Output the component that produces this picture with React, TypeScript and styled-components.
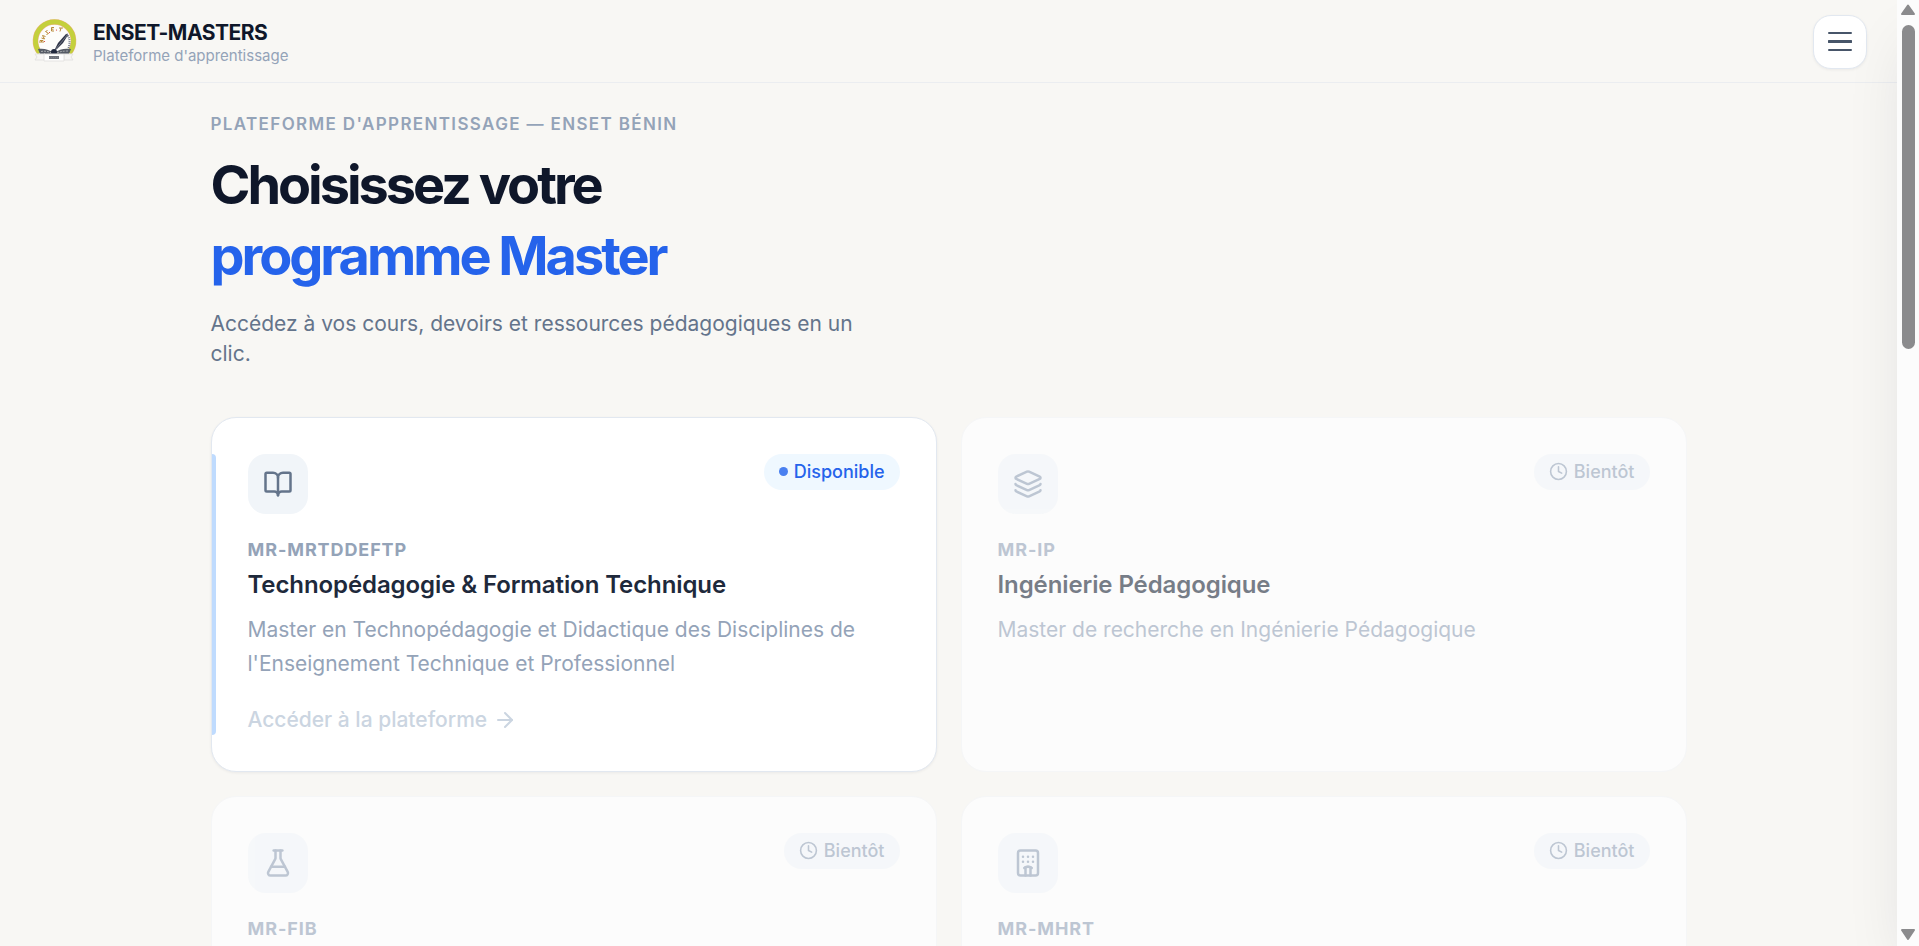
import React from "react";
import styled, { createGlobalStyle, css } from "styled-components";
import {
  ArrowRight,
  BookOpen,
  Clock,
  FlaskConical,
  Hotel,
  Layers,
  type LucideIcon,
} from "lucide-react";

const GlobalStyle = createGlobalStyle`
  *, *::before, *::after { box-sizing: border-box; }
  body {
    margin: 0;
    background: #f8f7f4;
    color: #0f172a;
    font-family: Inter, "Liberation Sans", sans-serif;
  }
  h1, h2, p { margin: 0; }
`;

const Shell = styled.div`
  display: flex;
  height: 100vh;
  overflow: hidden;
`;

const Page = styled.div`
  position: relative;
  flex: 1;
  min-width: 0;
  overflow: hidden;
`;

const Header = styled.header`
  display: flex;
  align-items: center;
  justify-content: space-between;
  height: 83px;
  padding: 2px 30px 0;
  border-bottom: 1px solid #ebedf0;
`;

const Brand = styled.a`
  display: flex;
  align-items: center;
  gap: 13px;
  color: inherit;
  text-decoration: none;
`;

const BrandText = styled.span`
  display: flex;
  flex-direction: column;
  padding-top: 4px;
`;

const BrandName = styled.span`
  font-size: 21px;
  line-height: 24px;
  font-weight: 700;
  letter-spacing: -0.025em;
`;

const BrandTagline = styled.span`
  font-size: 15px;
  line-height: 22px;
  color: #94a3b8;
`;

const MenuButton = styled.button`
  display: flex;
  align-items: center;
  justify-content: center;
  width: 54px;
  height: 54px;
  padding: 0;
  border: 1px solid #e2e8f0;
  border-radius: 18px;
  background: #fff;
  color: #475569;
  box-shadow: 0 1px 3px rgba(15, 23, 42, 0.06);
  cursor: pointer;
`;

const Main = styled.main`
  max-width: 1536px;
  margin: 0 auto;
  padding: 28px 30px 60px;
`;

const Hero = styled.section`
  margin-bottom: 48px;
`;

const Eyebrow = styled.p`
  margin-bottom: 12px;
  font-size: 17px;
  line-height: 26px;
  font-weight: 600;
  letter-spacing: 0.08em;
  text-transform: uppercase;
  color: #94a3b8;
`;

const Headline = styled.h1`
  margin-bottom: 18px;
  font-size: 54px;
  line-height: 71px;
  font-weight: 700;
  letter-spacing: -0.056em;
`;

const HeadlineAccent = styled.span`
  display: block;
  color: #2563eb;
`;

const Lead = styled.p`
  max-width: 660px;
  font-size: 21px;
  line-height: 30px;
  color: #64748b;
`;

const Grid = styled.section`
  display: grid;
  grid-template-columns: repeat(2, minmax(0, 1fr));
  gap: 24px;
`;

const cardBase = css`
  position: relative;
  display: block;
  min-height: 355px;
  padding: 36px;
  border: 1px solid #e2e8f0;
  border-radius: 25px;
  background: #fff;
  color: inherit;
  text-decoration: none;
`;

const OpenCard = styled.a`
  ${cardBase}
  box-shadow: 0 1px 3px rgba(15, 23, 42, 0.06);

  &::before {
    content: "";
    position: absolute;
    top: 36px;
    bottom: 36px;
    left: 0;
    width: 4px;
    border-radius: 0 4px 4px 0;
    background: #bfdbfe;
  }
`;

const SoonCard = styled.article`
  ${cardBase}
  border-color: #f5f6f7;
  background: #fcfcfc;

  & > * {
    opacity: 0.6;
  }
`;

const CardTop = styled.div`
  display: flex;
  align-items: flex-start;
  justify-content: space-between;
  margin-bottom: 22px;
`;

const IconTile = styled.span<{ $active: boolean }>`
  display: flex;
  align-items: center;
  justify-content: center;
  width: 60px;
  height: 60px;
  border-radius: 18px;
  background: #f1f5f9;
  color: ${({ $active }) => ($active ? "#64748b" : "#94a3b8")};
`;

const Badge = styled.span<{ $active: boolean }>`
  display: flex;
  align-items: center;
  gap: 6px;
  height: 36px;
  padding: 0 15px 1px;
  border-radius: 18px;
  font-size: 18px;
  line-height: 27px;
  font-weight: 500;
  background: ${({ $active }) => ($active ? "#eff8ff" : "#f1f5f9")};
  color: ${({ $active }) => ($active ? "#2563eb" : "#94a3b8")};
`;

const Dot = styled.span`
  width: 9px;
  height: 9px;
  border-radius: 50%;
  background: #4a80f0;
`;

const Code = styled.p`
  margin-bottom: 5px;
  font-size: 18px;
  line-height: 27px;
  font-weight: 700;
  letter-spacing: 0.05em;
  color: #94a3b8;
`;

const Title = styled.h2`
  margin-bottom: 12px;
  font-size: 24px;
  line-height: 33px;
  font-weight: 600;
  letter-spacing: -0.004em;
  color: #1e293b;
`;

const Description = styled.p`
  font-size: 21px;
  line-height: 34px;
  color: #94a3b8;
`;

const Access = styled.span`
  display: flex;
  align-items: center;
  gap: 6px;
  margin-top: 24px;
  font-size: 21px;
  line-height: 30px;
  font-weight: 500;
  color: #cbd5e1;
`;

const Drawer = styled.div`
  position: absolute;
  top: 0;
  left: 100%;
  width: 400px;
  height: 100%;
  background: #fff;
  box-shadow: 0 31px 62px -15px rgba(15, 23, 42, 0.12);
`;

const ScrollTrack = styled.div`
  display: flex;
  flex-direction: column;
  align-items: center;
  width: 22px;
  padding: 4px 0 5px;
  background: #fcfcfc;
`;

const ScrollThumb = styled.div`
  width: 13px;
  height: 34.6%;
  margin: 9px 0 auto;
  border-radius: 7px;
  background: #8b8b8d;
`;

const Logo = () => (
  <svg width="50" height="50" viewBox="0 0 50 50" aria-hidden="true">
    <path
      d="M9.8 36A19 19 0 1 1 39.200 36"
      fill="#fdfdfb"
      stroke="#f0b48a"
      strokeWidth="5.6"
    />
    <path d="M9.800 36A19 19 0 1 1 39.200 36" fill="none" stroke="#c4d03c" strokeWidth="4.800" />
    <g fill="none" stroke="#b98b3a" strokeWidth="1">
      <path d="M10 26V23.500H13V26M11.500 23.500V25.500" />
      <path d="M11.500 21L14.500 22L12.500 18.500L15.500 19.500" />
      <path d="M17.500 13.500L15.500 14.500L18.500 16.500L16.500 17.500" />
      <path d="M24 10.500H21.500V14H24M21.500 12.200H23.500" />
      <path d="M29 11H33M31 11L30 14.500" />
      <path
        d="M36.500 17C39.500 20 40.500 25 38.500 31"
        stroke="#6f7583"
        strokeDasharray="1 1"
        strokeWidth="2"
      />
    </g>
    <g fill="#d8342c">
      <circle cx="14.500" cy="24.500" r="0.600" />
      <circle cx="19.500" cy="15.500" r="0.600" />
      <circle cx="26.500" cy="13" r="0.600" />
    </g>
    <path d="M8 32C14 31 20 33 24 36C29 32 35 31 41 32L39 37H10Z" fill="#555b66" />
    <path
      d="M11 34.500C16 33.500 20 35 24 37M38 34C32 34 28 35 25 37"
      stroke="#a5a9ad"
      fill="none"
      strokeDasharray="2 1"
    />
    <path d="M24 34L28 26L36 17L38 18L33 26L27 32Z" fill="#303648" />
    <path d="M25 33L38 17" stroke="#707786" />
    <circle cx="24" cy="35" r="3" fill="#20283d" />
    <path d="M5 37H15V43H5L7 40ZM34 37H43L41 40L43 43H34Z" fill="#f7f6f5" stroke="#e4e3e1" />
    <path d="M14 37H34V44H14Z" fill="#fff" stroke="#e4e3e1" />
    <path d="M19 40.500H29" stroke="#4b4f5a" strokeWidth="3" opacity="0.8" />
    <path d="M19 40.500H29" stroke="#7c808a" strokeWidth="1" strokeDasharray="1 1" />
  </svg>
);

const MenuGlyph = () => (
  <svg width="24" height="20" viewBox="0 0 24 20" stroke="currentColor" strokeLinecap="round" aria-hidden="true">
    <path d="M1 1H23M1 18H23" strokeWidth="2" />
    <path d="M1 9.500H23" strokeWidth="3" />
  </svg>
);

const ScrollArrow = ({ down }: { down?: boolean }) => (
  <svg width="16" height="12" viewBox="0 0 16 12" aria-hidden="true">
    <path
      d={down ? "M2 1H14L8 10Z" : "M2 10H14L8 1.500Z"}
      fill="#8b8b8d"
      stroke="#8b8b8d"
      strokeWidth="2"
      strokeLinejoin="round"
    />
  </svg>
);

interface Programme {
  code: string;
  title: string;
  description: string;
  icon: LucideIcon;
  href?: string;
}

const programmes: Programme[] = [
  {
    code: "MR-MRTDDEFTP",
    title: "Technopédagogie & Formation Technique",
    description:
      "Master en Technopédagogie et Didactique des Disciplines de l'Enseignement Technique et Professionnel",
    icon: BookOpen,
    href: "#mr-mrtddeftp",
  },
  {
    code: "MR-IP",
    title: "Ingénierie Pédagogique",
    description: "Master de recherche en Ingénierie Pédagogique",
    icon: Layers,
  },
  { code: "MR-FIB", title: "", description: "", icon: FlaskConical },
  { code: "MR-MHRT", title: "", description: "", icon: Hotel },
];

const CardContent = ({ code, title, description, icon: Icon, href }: Programme) => {
  const active = Boolean(href);
  return (
    <>
      <CardTop>
        <IconTile $active={active}>
          <Icon size={30} />
        </IconTile>
        <Badge $active={active}>
          {active ? <Dot /> : <Clock size={19} />}
          {active ? "Disponible" : "Bientôt"}
        </Badge>
      </CardTop>
      <Code>{code}</Code>
      {title && <Title>{title}</Title>}
      {description && <Description>{description}</Description>}
      {active && (
        <Access>
          Accéder à la plateforme
          <ArrowRight size={24} />
        </Access>
      )}
    </>
  );
};

export default function App() {
  return (
    <>
      <GlobalStyle />
      <Shell>
        <Page>
          <Header>
            <Brand href="#accueil">
              <Logo />
              <BrandText>
                <BrandName>ENSET-MASTERS</BrandName>
                <BrandTagline>Plateforme d'apprentissage</BrandTagline>
              </BrandText>
            </Brand>
            <MenuButton type="button" aria-label="Menu">
              <MenuGlyph />
            </MenuButton>
          </Header>
          <Main>
            <Hero>
              <Eyebrow>Plateforme d'apprentissage — ENSET Bénin</Eyebrow>
              <Headline>
                Choisissez votre
                <HeadlineAccent>programme Master</HeadlineAccent>
              </Headline>
              <Lead>Accédez à vos cours, devoirs et ressources pédagogiques en un clic.</Lead>
            </Hero>
            <Grid>
              {programmes.map((programme) =>
                programme.href ? (
                  <OpenCard key={programme.code} href={programme.href}>
                    <CardContent {...programme} />
                  </OpenCard>
                ) : (
                  <SoonCard key={programme.code}>
                    <CardContent {...programme} />
                  </SoonCard>
                ),
              )}
            </Grid>
          </Main>
          <Drawer />
        </Page>
        <ScrollTrack aria-hidden="true">
          <ScrollArrow />
          <ScrollThumb />
          <ScrollArrow down />
        </ScrollTrack>
      </Shell>
    </>
  );
}
